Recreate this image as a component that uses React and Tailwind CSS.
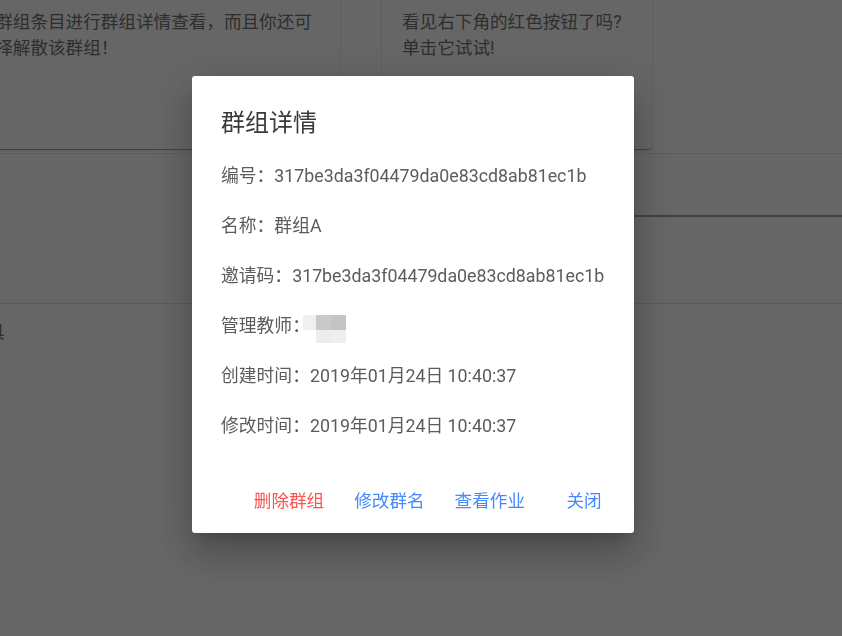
export default function App() {
  const rows = [
    ['编号：', '317be3da3f04479da0e83cd8ab81ec1b'],
    ['名称：', '群组A'],
    ['邀请码：', '317be3da3f04479da0e83cd8ab81ec1b'],
  ];
  const times = [
    ['创建时间：', '2019年01月24日 10:40:37'],
    ['修改时间：', '2019年01月24日 10:40:37'],
  ];

  return (
    <div className="relative min-h-screen w-full overflow-hidden bg-white font-[Roboto,'Noto_Sans_CJK_SC',sans-serif]">
      {/* page behind the dialog */}
      <div className="flex gap-[42px] -mt-[12px]">
        <div className="-ml-[60px] w-[400px] h-[161px] shrink-0 rounded-[4px] bg-white pt-[21px] pl-[20px] pr-[20px] text-[17.6px] leading-[26.4px] text-[#737373] shadow-[0_2px_1px_-1px_rgba(0,0,0,.2),0_1px_1px_0_rgba(0,0,0,.14),0_1px_3px_0_rgba(0,0,0,.12)]">
          单击群组条目进行群组详情查看，而且你还可以选择解散该群组！
        </div>
        <div className="w-[270px] h-[161px] shrink-0 rounded-[4px] bg-white pt-[21px] px-[20px] text-[17.6px] leading-[26.4px] text-[#737373] shadow-[0_2px_1px_-1px_rgba(0,0,0,.2),0_1px_1px_0_rgba(0,0,0,.14),0_1px_3px_0_rgba(0,0,0,.12)]">
          看见右下角的红色按钮了吗?单击它试试!
        </div>
      </div>

      <div className="mt-[4px] flex h-[64px] border-t border-[#e8e8e8]">
        <div className="flex-1" />
        <div className="flex-1 border-b-2 border-[#a0a0a0]" />
      </div>

      <div className="h-[87px] border-b border-[#e0e0e0]" />

      <div className="flex h-[56px] items-center">
        <span className="-ml-[13px] text-[17.6px] text-[#707070]">具</span>
      </div>

      {/* dialog */}
      <div className="fixed inset-0 bg-black/60 pt-[76px] pl-[192px]">
        <div className="flex h-[457px] w-[442px] flex-col rounded-[3px] bg-white px-[29px] pt-[31px] pb-[12px] shadow-[0_11px_15px_-7px_rgba(0,0,0,.2),0_24px_38px_3px_rgba(0,0,0,.14),0_9px_46px_8px_rgba(0,0,0,.12)]">
          <h2 className="text-[24px] leading-[32px] text-[#3a3a3a]">群组详情</h2>

          <div className="mt-[24px] flex flex-col gap-[24px] text-[17.8px] leading-[26px] text-[#5c5c5c]">
            {rows.map(([label, value]) => (
              <p key={label}>
                {label}
                {value}
              </p>
            ))}
            <p className="flex h-[26px] items-center">
              <span>管理教师：</span>
              <span className="-ml-[7px] grid h-[28px] translate-y-[3px] grid-cols-[13px_15px_15px] grid-rows-[15px_13px] blur-[0.6px]">
                <span className="bg-[#f0f0f0]" />
                <span className="bg-[#c9c9c9]" />
                <span className="bg-[#c4c4c4]" />
                <span className="bg-white" />
                <span className="bg-[#ededed]" />
                <span className="bg-[#efefef]" />
              </span>
            </p>
            {times.map(([label, value]) => (
              <p key={label}>
                {label}
                {value}
              </p>
            ))}
          </div>

          <div className="mt-auto -mr-[23px] flex justify-end text-[17.6px]">
            <button className="h-[40px] min-w-[88px] px-[15px] text-[#ff5252]">删除群组</button>
            <button className="h-[40px] min-w-[88px] px-[15px] text-[#448aff]">修改群名</button>
            <button className="h-[40px] min-w-[88px] px-[15px] text-[#448aff]">查看作业</button>
            <button className="h-[40px] min-w-[88px] px-[15px] text-[#448aff]">关闭</button>
          </div>
        </div>
      </div>
    </div>
  );
}
